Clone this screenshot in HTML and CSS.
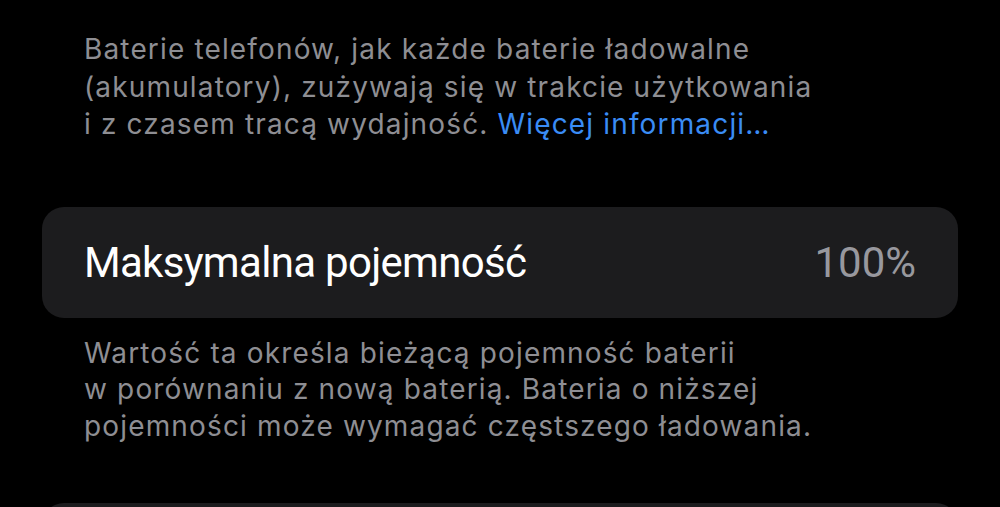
FILE: index.html
```html
<!DOCTYPE html>
<html lang="pl">
<head>
<meta charset="utf-8">
<link rel="stylesheet" href="styles.css">
</head>
<body>
<main class="page">
  <p class="note note-top">Baterie telefonów, jak każde baterie ładowalne<br>(akumulatory), zużywają się w trakcie użytkowania<br>i z czasem tracą wydajność. <a class="link" href="#">Więcej informacji…</a></p>
  <section class="card">
    <div class="row">
      <span class="label">Maksymalna pojemność</span>
      <span class="value">100%</span>
    </div>
  </section>
  <p class="note note-bottom">Wartość ta określa bieżącą pojemność baterii<br>w porównaniu z nową baterią. Bateria o niższej<br>pojemności może wymagać częstszego ładowania.</p>
  <section class="card card-next"></section>
</main>
</body>
</html>
```
FILE: styles.css
```css
html, body {
  margin: 0;
  padding: 0;
  background: #000;
  overflow: hidden;
}
.page {
  width: 1000px;
  height: 507px;
  overflow: hidden;
  display: flex;
  flex-direction: column;
  font-family: Inter, "Noto Sans", "Liberation Sans", sans-serif;
}
.note {
  margin: 0;
  padding: 0 20px 0 84px;
  color: #8e8e93;
  font-size: 28px;
  line-height: 37.5px;
  letter-spacing: 1.15px;
  white-space: nowrap;
}
.note-top {
  margin-top: 31px;
}
.note-bottom {
  margin-top: 17px;
  line-height: 36.5px;
}
.link {
  color: #3a8cf5;
  text-decoration: none;
}
.card {
  margin: 63px 42px 0 42px;
  background: #1c1c1e;
  border-radius: 22px;
  flex-shrink: 0;
}
.card-next {
  margin-top: 59px;
  height: 100px;
}
.row {
  height: 111px;
  display: flex;
  align-items: center;
  justify-content: space-between;
  padding: 0 42px;
  font-family: Roboto, Inter, "Liberation Sans", sans-serif;
  font-size: 42px;
}
.label {
  color: #fff;
  letter-spacing: -0.7px;
}
.value {
  color: #98989e;
}
```
